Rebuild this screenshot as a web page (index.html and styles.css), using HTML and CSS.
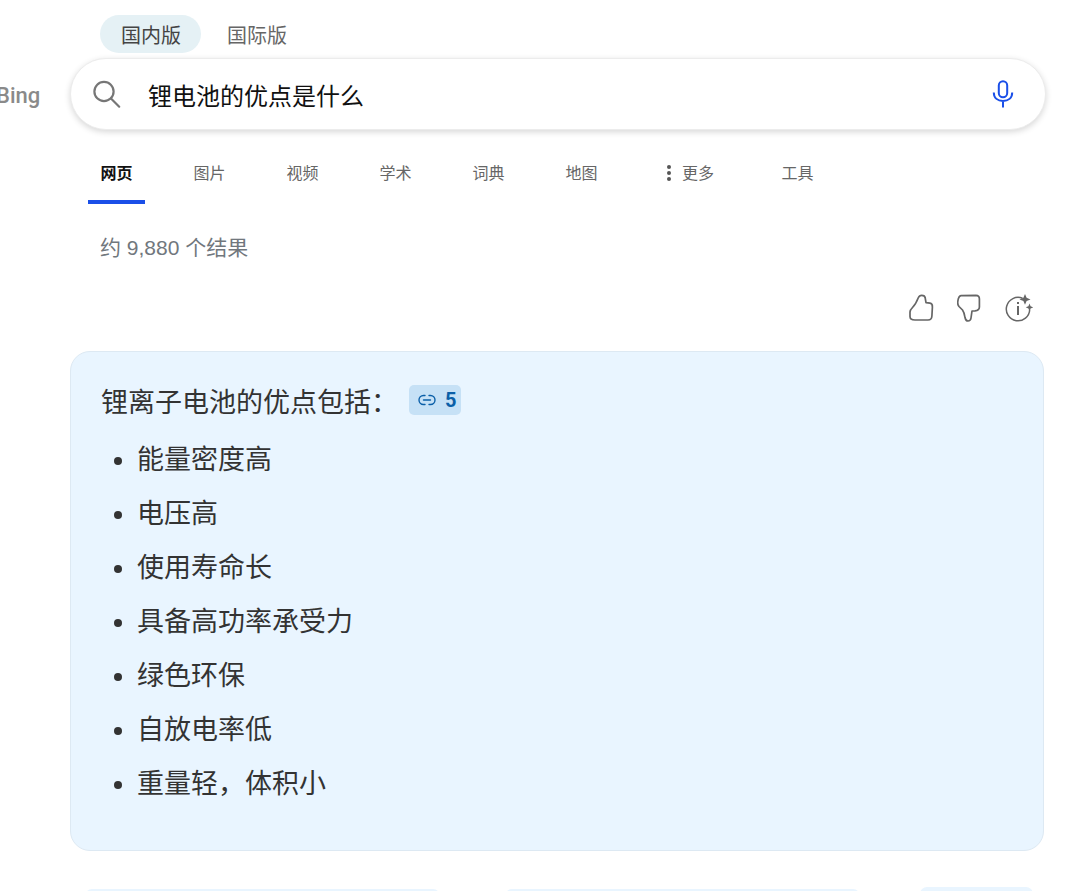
FILE: index.html
```html
<!DOCTYPE html>
<html lang="zh-CN">
<head>
  <meta charset="UTF-8">
  <meta name="viewport" content="width=device-width, initial-scale=1">
  <title>锂电池的优点是什么 - Bing</title>
  <link rel="stylesheet" href="styles.css">
</head>
<body>

<div class="page">
  <div class="regions">
    <a class="region active">国内版</a>
    <a class="region">国际版</a>
  </div>

  <div class="search-row">
    <span class="logo-text">Bing</span>
    <div class="search-box">
      <svg class="search-icon" width="30" height="30" viewBox="0 0 30 30">
        <circle cx="13" cy="12.5" r="9.6" fill="none" stroke="#767676" stroke-width="2.2"/>
        <path d="M20 19.5l8.2 8.2" fill="none" stroke="#767676" stroke-width="2.2" stroke-linecap="round"/>
      </svg>
      <span class="query">锂电池的优点是什么</span>
      <svg class="mic-icon" width="22" height="28" viewBox="0 0 22 28">
        <rect x="6.8" y="1.2" width="8.4" height="16" rx="4.2" fill="none" stroke="#1a4fe8" stroke-width="2"/>
        <path d="M1.8 12.5c0 5.5 4 8.600 9.200 8.600s9.200-3.100 9.200-8.600M11 21v6.500" fill="none" stroke="#1a4fe8" stroke-width="2"/>
      </svg>
    </div>
  </div>

  <nav class="tabs">
    <a class="tab active">网页</a>
    <a class="tab">图片</a>
    <a class="tab">视频</a>
    <a class="tab">学术</a>
    <a class="tab">词典</a>
    <a class="tab">地图</a>
    <a class="tab more"><span class="dots"><i></i><i></i><i></i></span>更多</a>
    <a class="tab tools">工具</a>
  </nav>

  <div class="count">约 9,880 个结果</div>

  <div class="feedback">
    <svg width="26" height="28" viewBox="0 0 26 28">
      <path d="M9.300 3.700C10 2 11 1.300 12.700 1.300C15 1.300 16 2 16.200 4L17 8.700L21 9.200C23 9.500 23.500 11 23.400 13L22.900 22C22.800 24.500 21.500 26 19 26L6 26C3 26 1 25 1 22.500L1 18C1 16 2 15 3.500 13.500C6 11 8 7 9.300 3.700Z" fill="none" stroke="#666" stroke-width="1.700" stroke-linejoin="round"/>
    </svg>
    <svg width="26" height="28" viewBox="0 0 26 28">
      <path d="M4 1.700L19 1.300C21.300 1.300 22.400 2.500 22.400 5L22.400 13C22.400 15.500 21 16.500 18 16.800L15 17L14 24C13.700 26 12.500 27 11 27C9.500 27 8.500 26 8 23.500C7.500 20 7 18 5.500 16L2 12.500C.8 11 .5 9.500 .8 7.500C1.200 4 2 2 4 1.700Z" fill="none" stroke="#666" stroke-width="1.700" stroke-linejoin="round"/>
    </svg>
    <svg width="28" height="28" viewBox="0 0 28 28">
      <path d="M17.500 4.300a11.700 11.700 0 1 0 7.200 11.200" fill="none" stroke="#666" stroke-width="1.500"/>
      <path d="M13 12v9M13 8v2" fill="none" stroke="#666" stroke-width="2"/>
      <path d="M20 0l1.600 3.800l3.900 1.600l-3.900 1.600l-1.600 3.800l-1.600-3.800l-3.900-1.600l3.900-1.600zM24.500 9.500l1.100 2.700l2.700 1.100l-2.700 1.100l-1.100 2.700l-1.100-2.700l-2.700-1.100l2.700-1.100z" fill="#666"/>
    </svg>
  </div>

  <div class="answer">
    <p class="answer-title">锂离子电池的优点包括：<span class="cite">
      <svg width="18" height="12" viewBox="0 0 18 12">
        <path d="M7 1.500H5.500a4.500 4.500 0 0 0 0 9H7M11 1.500h1.500a4.500 4.500 0 0 1 0 9H11M5.500 6h7" fill="none" stroke="#0a5fa8" stroke-width="1.400" stroke-linecap="round"/>
      </svg>5</span></p>
    <ul class="answer-list">
      <li>能量密度高</li>
      <li>电压高</li>
      <li>使用寿命长</li>
      <li>具备高功率承受力</li>
      <li>绿色环保</li>
      <li>自放电率低</li>
      <li>重量轻，体积小</li>
    </ul>
  </div>

  <div class="next-row">
    <div class="next-card"></div>
    <div class="next-card"></div>
    <div class="next-card small"></div>
  </div>
</div>

</body>
</html>
```

FILE: styles.css
```css
html, body {
  height: 891px;
  overflow: hidden;
}
body {
  margin: 0;
  background: #fff;
  font-family: "Liberation Sans", Roboto, "Noto Sans CJK SC", sans-serif;
  color: #333;
}
.page {
  width: 1081px;
  height: 891px;
  overflow: hidden;
  padding-left: 70px;
  box-sizing: border-box;
}
.regions {
  display: flex;
  gap: 5px;
  padding: 15px 0 0 30px;
  height: 38px;
  box-sizing: content-box;
}
.region {
  height: 38px;
  line-height: 42px;
  padding: 0 20px 0 21px;
  border-radius: 19px;
  font-size: 20px;
  color: #666;
}
.region.active {
  background: #e5f1f5;
  color: #444;
}
.search-row {
  position: relative;
  margin-top: 5px;
}
.logo-text {
  position: absolute;
  left: -74px;
  top: 25px;
  font-family: Roboto, sans-serif;
  font-size: 22px;
  font-weight: 500;
  color: #8a8a8a;
}
.search-box {
  width: 976px;
  height: 72px;
  box-sizing: border-box;
  display: flex;
  align-items: center;
  padding: 0 31px 0 20px;
  background: #fff;
  border-radius: 36px;
  border: 1px solid #ececec;
  box-shadow: 0 2px 6px rgba(0,0,0,0.16);
}
.search-icon {
  flex: none;
}
.query {
  margin-left: 27px;
  font-size: 24px;
  color: #111;
  flex: 1;
}
.mic-icon {
  flex: none;
}
.tabs {
  display: flex;
  margin: 22px 0 0 18px;
  height: 51px;
}
.tab {
  width: 57px;
  margin-right: 36px;
  text-align: center;
  line-height: 44px;
  font-size: 16px;
  color: #666;
}
.tab.active {
  font-weight: bold;
  color: #111;
  border-bottom: 4px solid #1a4fe8;
  height: 48px;
}
.tab.more {
  display: flex;
  align-items: center;
  height: 44px;
  width: 47px;
  margin-left: 21px;
  margin-right: 67px;
  gap: 11px;
  flex: none;
}
.dots {
  display: flex;
  flex-direction: column;
  gap: 2px;
  margin-top: -3px;
}
.dots i {
  display: block;
  width: 4px;
  height: 4px;
  border-radius: 50%;
  background: #555;
}
.tab.tools {
  width: 33px;
  margin: 0;
}
.count {
  margin: 31px 0 0 30px;
  font-size: 21px;
  line-height: 28px;
  color: #71777d;
}
.feedback {
  display: flex;
  justify-content: flex-end;
  gap: 22px;
  width: 963px;
  margin-top: 32px;
  height: 28px;
}
.answer {
  width: 974px;
  height: 500px;
  box-sizing: border-box;
  margin-top: 29px;
  padding: 32px 30px 0;
  background: #e9f5ff;
  border: 1px solid #dde9f3;
  border-radius: 20px;
}
.answer-title {
  margin: 0;
  font-size: 27px;
  line-height: 38px;
  display: flex;
  align-items: center;
}
.cite {
  display: inline-flex;
  align-items: center;
  gap: 9px;
  width: 52px;
  height: 30px;
  box-sizing: border-box;
  margin: 0 0 6px 11px;
  padding: 0 0 0 9px;
  border-radius: 5px;
  background: #c6e1f6;
  color: #0a5fa8;
  font-family: Roboto, sans-serif;
  font-size: 20px;
  font-weight: bold;
}
.answer-list {
  margin: 11px 0 0;
  padding: 0 0 0 36px;
  font-size: 27px;
  line-height: 54px;
}
.next-row {
  display: flex;
  margin: 38px 0 0 15px;
}
.next-card {
  width: 355px;
  height: 30px;
  margin-right: 65px;
  background: #e9f5ff;
  border-radius: 7px;
  flex: none;
}
.next-card.small {
  width: 113px;
  margin: -2px 0 0 -5px;
}
```
